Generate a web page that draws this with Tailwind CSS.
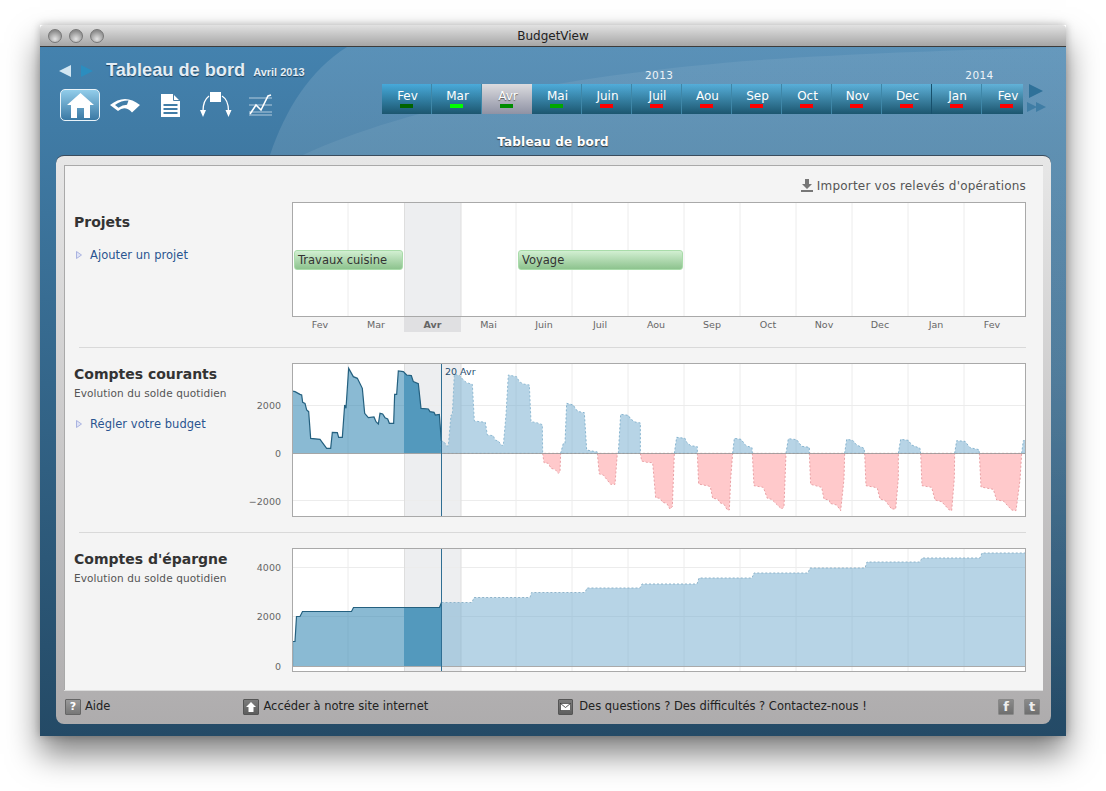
<!DOCTYPE html>
<html lang="fr">
<head>
<meta charset="utf-8">
<title>BudgetView</title>
<script src="https://cdn.jsdelivr.net/npm/@tailwindcss/browser@4"></script>
</head>
<body class="bg-white w-[1106px] h-[791px] overflow-hidden pt-[25px] pl-[40px] font-['DejaVu_Sans',sans-serif]">

<!-- Window -->
<div class="w-[1026px] h-[711px] flex flex-col shadow-[0_18px_30px_rgba(0,0,0,0.5),0_0_8px_rgba(0,0,0,0.25)]">

  <!-- Title bar -->
  <div class="h-[22px] shrink-0 flex items-center relative bg-gradient-to-b from-[#e2e2e2] to-[#a6a6a6] border-b border-[#3c3c3c] rounded-t-[4px]">
    <div class="flex gap-[7px] pl-[8px]">
      <span class="w-[14px] h-[14px] rounded-full border border-[#777] bg-[radial-gradient(circle_at_50%_75%,#e4e4e4,#8c8c8c_75%)]"></span>
      <span class="w-[14px] h-[14px] rounded-full border border-[#777] bg-[radial-gradient(circle_at_50%_75%,#e4e4e4,#8c8c8c_75%)]"></span>
      <span class="w-[14px] h-[14px] rounded-full border border-[#777] bg-[radial-gradient(circle_at_50%_75%,#e4e4e4,#8c8c8c_75%)]"></span>
    </div>
    <span class="absolute left-0 right-0 text-center text-[12px] text-[#222]">BudgetView</span>
  </div>

  <!-- Blue body -->
  <div class="flex-1 relative flex flex-col overflow-hidden bg-gradient-to-b from-[#4482ae] to-[#244a66]">
    <!-- background swooshes -->
    <svg class="absolute left-0 top-0" width="1026" height="689" viewBox="40 47 1026 689">
      <defs>
        <linearGradient id="fade" x1="0" y1="47" x2="0" y2="720" gradientUnits="userSpaceOnUse">
          <stop offset="0" stop-color="#fff" stop-opacity="0.12"/>
          <stop offset="0.5" stop-color="#fff" stop-opacity="0.09"/>
          <stop offset="1" stop-color="#fff" stop-opacity="0"/>
        </linearGradient>
      </defs>
      <path d="M347 47C310 70 285 110 270 155C250 230 245 300 245 736H1066V47Z" fill="url(#fade)"/>
      <path d="M303 155C400 110 560 75 760 60C880 52 980 50 1066 47V736H245V190Z" fill="url(#fade)" opacity="0.6"/>
    </svg>

    <!-- Header -->
    <div class="relative h-[108px] shrink-0 flex flex-col">
      <div class="h-[80px] flex">
        <!-- Left: navigation and title -->
        <div class="w-[342px] shrink-0 pl-[19px] pt-[13px]">
          <div class="flex items-center h-[22px]">
            <svg width="12" height="12" viewBox="0 0 12 12"><path d="M0 6L12 0V12Z" fill="#d2e6f2"/></svg>
            <svg class="ml-[10px]" width="12" height="12" viewBox="0 0 12 12"><path d="M12 6L0 0V12Z" fill="#2b8dbf"/></svg>
            <span class="ml-[13px] text-[18.2px] font-bold text-[#e3edf5] font-['Liberation_Sans',sans-serif] [text-shadow:0_1px_1px_#1d3f5a]">Tableau de bord</span>
            <span class="ml-[8px] mt-[3px] text-[11px] font-bold text-[#e3edf5] font-['Liberation_Sans',sans-serif] [text-shadow:0_1px_1px_#1d3f5a]">Avril 2013</span>
          </div>
          <div class="flex items-center mt-[7px] ml-[1px] h-[32px]">
            <div class="w-[40px] h-[32px] rounded-[5px] border border-[#e8f2f8] bg-gradient-to-b from-[#92cdea] to-[#3a79a4] flex items-center justify-center">
              <svg width="27" height="25" viewBox="0 0 27 25"><path d="M13.5 0L27 12H23V25H17V15H10V25H4V12H0Z" fill="#fff"/></svg>
            </div>
            <svg class="ml-[10px]" width="30" height="16" viewBox="0 0 30 16"><path d="M0 8Q15 -4 30 8L22 15.500Q15 8 8 14ZM5 8L8.500 10.800Q12.500 7.800 17 7.800L18.500 3.600Q11 3.600 5 8Z" fill="#fff" fill-rule="evenodd"/></svg>
            <svg class="ml-[21px]" width="19" height="23" viewBox="0 0 19 23"><path d="M0 0H12L19 7V23H0Z M2.500 10V12H16.500V10Z M2.500 14V16H16.500V14Z M2.500 18V20H16.500V18Z" fill="#fff" fill-rule="evenodd"/><path d="M12.500 0V6.500H19" fill="none" stroke="#4a7fa6" stroke-width="1"/></svg>
            <svg class="ml-[20px]" width="32" height="26" viewBox="0 0 32 26"><rect x="10" y="0" width="11" height="10" fill="#fff"/><path d="M9 4C5 7 3 13 3 19M22 4C27 7 28.500 13 28.500 19" fill="none" stroke="#fff" stroke-width="1.300"/><path d="M0 18H6L3 25ZM25.500 18H31.500L28.500 25Z" fill="#fff"/></svg>
            <svg class="ml-[17px]" width="23" height="22" viewBox="0 0 23 22"><path d="M0 4H23M0 11H23M0 18H23M0 21H23" stroke="#cfe0ec" stroke-width="0.800" fill="none"/><path d="M1 20L7 11L12 16L19 2L22 1" stroke="#fff" stroke-width="1.600" fill="none"/></svg>
          </div>
        </div>
        <!-- Right: timeline -->
        <div class="pt-[20px]">
          <div class="h-[17px] flex text-[10.5px] tracking-[0.4px] text-[#eef4f8] leading-[17px]">
            <span class="ml-[263px]">2013</span>
            <span class="ml-[292px]">2014</span>
          </div>
          <div class="flex">
            <div class="w-[641px] h-[30px] flex overflow-hidden text-[12px] text-white leading-[25px] indent-[2px] bg-gradient-to-r from-[#46a9da] to-[#62b2d8]">
              <div class="w-[50px] shrink-0 text-center border-r border-[#3f87a8] bg-gradient-to-b from-transparent to-[#1c566f] relative">Fev<span class="absolute left-[18px] bottom-[6px] w-[13px] h-[4px] bg-[#006400]"></span></div>
              <div class="w-[50px] shrink-0 text-center border-r border-[#3f87a8] bg-gradient-to-b from-transparent to-[#1c566f] relative">Mar<span class="absolute left-[18px] bottom-[6px] w-[13px] h-[4px] bg-[#00ff00]"></span></div>
              <div class="w-[50px] shrink-0 text-center bg-gradient-to-b from-[#dcdcdf] to-[#8f92a4] relative [text-shadow:0_1px_1px_#555]">Avr<span class="absolute left-[18px] bottom-[6px] w-[13px] h-[4px] bg-[#008c00]"></span></div>
              <div class="w-[50px] shrink-0 text-center border-r border-[#3f87a8] bg-gradient-to-b from-transparent to-[#1c566f] relative">Mai<span class="absolute left-[18px] bottom-[6px] w-[13px] h-[4px] bg-[#00a800]"></span></div>
              <div class="w-[50px] shrink-0 text-center border-r border-[#3f87a8] bg-gradient-to-b from-transparent to-[#1c566f] relative">Juin<span class="absolute left-[18px] bottom-[6px] w-[13px] h-[4px] bg-[#ff0000]"></span></div>
              <div class="w-[50px] shrink-0 text-center border-r border-[#3f87a8] bg-gradient-to-b from-transparent to-[#1c566f] relative">Juil<span class="absolute left-[18px] bottom-[6px] w-[13px] h-[4px] bg-[#ff0000]"></span></div>
              <div class="w-[50px] shrink-0 text-center border-r border-[#3f87a8] bg-gradient-to-b from-transparent to-[#1c566f] relative">Aou<span class="absolute left-[18px] bottom-[6px] w-[13px] h-[4px] bg-[#ff0000]"></span></div>
              <div class="w-[50px] shrink-0 text-center border-r border-[#3f87a8] bg-gradient-to-b from-transparent to-[#1c566f] relative">Sep<span class="absolute left-[18px] bottom-[6px] w-[13px] h-[4px] bg-[#ff0000]"></span></div>
              <div class="w-[50px] shrink-0 text-center border-r border-[#3f87a8] bg-gradient-to-b from-transparent to-[#1c566f] relative">Oct<span class="absolute left-[18px] bottom-[6px] w-[13px] h-[4px] bg-[#ff0000]"></span></div>
              <div class="w-[50px] shrink-0 text-center border-r border-[#3f87a8] bg-gradient-to-b from-transparent to-[#1c566f] relative">Nov<span class="absolute left-[18px] bottom-[6px] w-[13px] h-[4px] bg-[#ff0000]"></span></div>
              <div class="w-[50px] shrink-0 text-center border-r border-[#17506c] bg-gradient-to-b from-transparent to-[#1c566f] relative">Dec<span class="absolute left-[18px] bottom-[6px] w-[13px] h-[4px] bg-[#ff0000]"></span></div>
              <div class="w-[50px] shrink-0 text-center border-r border-[#3f87a8] bg-gradient-to-b from-transparent to-[#1c566f] relative">Jan<span class="absolute left-[18px] bottom-[6px] w-[13px] h-[4px] bg-[#ff0000]"></span></div>
              <div class="w-[50px] shrink-0 text-center bg-gradient-to-b from-transparent to-[#1c566f] relative">Fev<span class="absolute left-[18px] bottom-[6px] w-[13px] h-[4px] bg-[#ff0000]"></span></div>
            </div>
            <div class="ml-[4px] flex flex-col">
              <svg class="ml-[2px]" width="14" height="14" viewBox="0 0 14 14"><path d="M0 0L14 7L0 14Z" fill="#2f7199"/></svg>
              <svg class="mt-[4px]" width="19" height="10" viewBox="0 0 19 10"><path d="M0 0L10 5L0 10ZM9 0L19 5L9 10Z" fill="#3f7da5"/></svg>
            </div>
          </div>
        </div>
      </div>
      <div class="text-center text-[12px] font-bold text-white tracking-[0.2px] leading-[20px] mt-[5px] [text-shadow:0_1px_1px_#333]">Tableau de bord</div>
    </div>

    <!-- Panel -->
    <div class="relative mx-[16px] w-[995px] h-[569px] rounded-[8px] border-t border-[#3a4c5c] flex flex-col bg-gradient-to-b from-[#e7e7e7] to-[#aeacad] px-[8px] pt-[9px]">
      <div class="h-[525px] shrink-0 bg-[#f4f4f4] border-t border-l border-[#a9a9a9] shadow-[0_1px_0_#ddd]">

        <!-- Import -->
        <div class="h-[36px] pt-[4px] flex items-center justify-end pr-[17px] text-[12px] tracking-[0.2px] text-[#555]">
          <svg class="mr-[4px] mb-[2px]" width="12" height="13" viewBox="0 0 12 13"><path d="M4 0H8V5H11L6 10L1 5H4ZM0 11H12V13H0Z" fill="#777"/></svg>
          Importer vos relevés d'opérations
        </div>

        <!-- Projets -->
        <div class="flex">
          <div class="w-[227px] shrink-0 pl-[9px]">
            <h2 class="text-[14px] font-bold text-[#333] leading-[18px] mt-[11px]">Projets</h2>
            <a class="mt-[15px] flex items-center text-[11.5px] tracking-[0.05px] text-[#2a5490] leading-[18px]">
              <svg class="ml-[2px] mr-[8px]" width="6" height="8" viewBox="0 0 6 8"><path d="M.5 .5L5.500 4L.5 7.500Z" fill="#dfe3f5" stroke="#aab3e0"/></svg>Ajouter un projet
            </a>
          </div>
          <div class="w-[734px]">
            <div class="relative w-[734px] h-[115px]">
              <svg class="block" width="734" height="115" viewBox="292 202 734 115">
                <rect x="292" y="202" width="734" height="115" fill="#fff"/>
                <rect x="404" y="202" width="57" height="115" fill="#edeef0"/>
                <path d="M348 202V317M516 202V317M572 202V317M628 202V317M684 202V317M740 202V317M796 202V317M852 202V317M908 202V317M964 202V317" stroke="#ececec" fill="none"/>
                <path d="M404.500 202V317M461 202V317" stroke="#dedede" fill="none"/>
                <rect x="292.500" y="202.500" width="733" height="114" fill="none" stroke="#a9a9a9"/>
              </svg>
              <div class="absolute left-[2px] top-[48px] w-[109px] h-[20px] rounded-[3px] border border-[#a9dcaa] bg-gradient-to-b from-[#d2efd2] to-[#8dc38e] text-[11.5px] leading-[18px] text-[#333] pl-[3px]">Travaux cuisine</div>
              <div class="absolute left-[226px] top-[48px] w-[165px] h-[20px] rounded-[3px] border border-[#a9dcaa] bg-gradient-to-b from-[#d2efd2] to-[#8dc38e] text-[11.5px] leading-[18px] text-[#333] pl-[3px]">Voyage</div>
            </div>
            <div class="flex h-[15px] text-[9.5px] leading-[16px] text-[#666] text-center">
              <span class="w-[56px]">Fev</span><span class="w-[56px]">Mar</span><span class="w-[57px] font-bold bg-[#e0e0e2]">Avr</span><span class="w-[55px]">Mai</span><span class="w-[56px]">Juin</span><span class="w-[56px]">Juil</span><span class="w-[56px]">Aou</span><span class="w-[56px]">Sep</span><span class="w-[56px]">Oct</span><span class="w-[56px]">Nov</span><span class="w-[56px]">Dec</span><span class="w-[56px]">Jan</span><span class="w-[56px]">Fev</span>
            </div>
          </div>
        </div>

        <div class="ml-[14px] w-[947px] h-px bg-[#d9d9d9] mt-[15px]"></div>

        <!-- Comptes courants -->
        <div class="flex mt-[15px]">
          <div class="w-[227px] shrink-0 pl-[9px] relative">
            <h2 class="text-[14px] font-bold text-[#333] leading-[18px] mt-[2px]">Comptes courants</h2>
            <p class="text-[10.5px] tracking-[0.1px] text-[#555] leading-[14px] mt-[3px]">Evolution du solde quotidien</p>
            <a class="mt-[15px] flex items-center text-[11.5px] tracking-[0.05px] text-[#2a5490] leading-[18px]">
              <svg class="ml-[2px] mr-[8px]" width="6" height="8" viewBox="0 0 6 8"><path d="M.5 .5L5.500 4L.5 7.500Z" fill="#dfe3f5" stroke="#aab3e0"/></svg>Régler votre budget
            </a>
            <span class="absolute right-[11px] top-[36px] text-[9.5px] leading-[14px] text-[#666]">2000</span>
            <span class="absolute right-[11px] top-[84px] text-[9.5px] leading-[14px] text-[#666]">0</span>
            <span class="absolute right-[11px] top-[132px] text-[9.5px] leading-[14px] text-[#666]">−2000</span>
          </div>
          <svg class="block" width="734" height="154" viewBox="292 363 734 154">
            <defs><clipPath id="cur-band"><rect x="404" y="363" width="37" height="90"/></clipPath></defs>
            <rect x="292" y="363" width="734" height="154" fill="#fff"/>
            <rect x="404" y="363" width="57" height="154" fill="#edeef0"/>
            <path d="M348 363V517M516 363V517M572 363V517M628 363V517M684 363V517M740 363V517M796 363V517M852 363V517M908 363V517M964 363V517M292 405.500H1026M292 500.500H1026" stroke="#ececec" fill="none"/>
            <path d="M404.500 363V517M461 363V517" stroke="#dedede" fill="none"/>

            <g transform="translate(250 355) scale(.33333)">
              <!-- past balance -->
              <path d="M127 295V108L135 110L150 118L155 120L158 142L165 145L170 165L176 170L182 250L210 253L230 280L242 280L247 232L262 233L266 247L277 247L284 150L288 160L296 40L310 65L322 70L337 100L344 175L355 188L372 186L378 200L385 207L390 175L398 177L405 188L413 192L418 205L431 205L434 118L440 118L445 48L460 50L470 60L484 62L490 80L505 86L513 160L535 162L540 170L552 172L556 180L568 178L574 258V295Z" fill="#3c8cb6" fill-opacity="0.6"/>
            </g>
            <g clip-path="url(#cur-band)"><g transform="translate(250 355) scale(.33333)">
              <path d="M127 295V108L135 110L150 118L155 120L158 142L165 145L170 165L176 170L182 250L210 253L230 280L242 280L247 232L262 233L266 247L277 247L284 150L288 160L296 40L310 65L322 70L337 100L344 175L355 188L372 186L378 200L385 207L390 175L398 177L405 188L413 192L418 205L431 205L434 118L440 118L445 48L460 50L470 60L484 62L490 80L505 86L513 160L535 162L540 170L552 172L556 180L568 178L574 258V295Z" fill="#5399bd"/>
            </g></g>
            <g transform="translate(250 355) scale(.33333)">
              <path d="M127 108L135 110L150 118L155 120L158 142L165 145L170 165L176 170L182 250L210 253L230 280L242 280L247 232L262 233L266 247L277 247L284 150L288 160L296 40L310 65L322 70L337 100L344 175L355 188L372 186L378 200L385 207L390 175L398 177L405 188L413 192L418 205L431 205L434 118L440 118L445 48L460 50L470 60L484 62L490 80L505 86L513 160L535 162L540 170L552 172L556 180L568 178L574 258" fill="none" stroke="#24607f" stroke-width="1.200" vector-effect="non-scaling-stroke"/>
              <!-- forecast -->
              <path d="M574 295V258L582 260L590 273L595 273L603 180L607 180L613 58L630 62L640 75L650 83L667 88L673 198L706 202L712 240L730 242L735 255L745 258L755 271L760 271L768 180L775 60L800 65L808 80L820 87L838 90L843 200L860 203L877 209L878 295Z" fill="#6fa9cd" fill-opacity="0.5" stroke="#8fbad3" stroke-dasharray="2 2" vector-effect="non-scaling-stroke"/>
            </g>
            <g transform="translate(540 355) scale(.33333)" stroke-dasharray="2 2">
              <g fill="#ff9398" fill-opacity="0.5" stroke="#e9a0a4">
                <path vector-effect="non-scaling-stroke" d="M8 295L12 323L25 325L33 340L45 343L55 355L60 350L62 295Z"/>
                <path vector-effect="non-scaling-stroke" d="M172 295L178 357L190 360L200 373L212 388L225 388L232 295Z"/>
                <path vector-effect="non-scaling-stroke" d="M301 295L305 318L320 322L338 323L347 428L360 430L368 442L380 445L390 462L397 455L403 295Z"/>
                <path vector-effect="non-scaling-stroke" d="M472 295L476 387L505 393L511 395L518 430L533 432L540 443L552 448L562 465L568 465L572 372L578 295Z"/>
                <path vector-effect="non-scaling-stroke" d="M637 295L642 392L670 397L682 430L695 433L712 450L725 462L732 455L738 295Z"/>
                <path vector-effect="non-scaling-stroke" d="M808 295L812 388L845 397L852 432L868 435L870 445L890 450L902 467L912 372L914 295Z"/>
              </g>
              <g fill="#6fa9cd" fill-opacity="0.5" stroke="#86b4cf">
                <path vector-effect="non-scaling-stroke" d="M62 295L70 265L75 265L80 145L100 150L107 163L117 170L133 173L140 285L172 291V295Z"/>
                <path vector-effect="non-scaling-stroke" d="M235 295L242 178L265 181L272 192L285 201L301 204V295Z"/>
                <path vector-effect="non-scaling-stroke" d="M403 295L410 247L435 250L440 262L452 272L472 275V295Z"/>
                <path vector-effect="non-scaling-stroke" d="M578 295L583 250L603 253L618 272L636 278L637 295Z"/>
                <path vector-effect="non-scaling-stroke" d="M738 295L745 251L770 254L785 274L808 277V295Z"/>
              </g>
            </g>
            <g transform="translate(830 355) scale(.33333)" stroke-dasharray="2 2">
              <g fill="#ff9398" fill-opacity="0.5" stroke="#e9a0a4">
                <path vector-effect="non-scaling-stroke" d="M104 295L108 392L135 397L142 400L150 432L165 436L185 462L197 462L205 370V295Z"/>
                <path vector-effect="non-scaling-stroke" d="M272 295L276 392L305 397L315 435L335 440L358 465L365 467L373 370L374 295Z"/>
                <path vector-effect="non-scaling-stroke" d="M448 295L453 396L490 403L500 435L520 438L545 465L558 467L570 375L575 295Z"/>
              </g>
              <g fill="#6fa9cd" fill-opacity="0.5" stroke="#86b4cf">
                <path vector-effect="non-scaling-stroke" d="M44 295L50 253L68 256L80 270L102 280L104 295Z"/>
                <path vector-effect="non-scaling-stroke" d="M205 295L212 253L235 256L245 270L270 280L272 295Z"/>
                <path vector-effect="non-scaling-stroke" d="M374 295L380 257L405 259L420 278L447 284L448 295Z"/>
                <path vector-effect="non-scaling-stroke" d="M575 295L580 257L586 256V295Z"/>
              </g>
            </g>
            <path d="M292 453.500H1026" stroke="#999" stroke-opacity="0.85" fill="none"/>
            <path d="M441.500 363V517" stroke="#2f6e93" fill="none"/>
            <text x="445" y="375" font-size="9.500" fill="#1f4d6e">20 Avr</text>
            <rect x="292.500" y="363.500" width="733" height="153" fill="none" stroke="#a9a9a9"/>
          </svg>
        </div>

        <div class="ml-[14px] w-[947px] h-px bg-[#d9d9d9] mt-[15px]"></div>

        <!-- Comptes d'épargne -->
        <div class="flex mt-[15px]">
          <div class="w-[227px] shrink-0 pl-[9px] relative">
            <h2 class="text-[14px] font-bold text-[#333] leading-[18px] mt-[2px]">Comptes d'épargne</h2>
            <p class="text-[10.5px] tracking-[0.1px] text-[#555] leading-[14px] mt-[3px]">Evolution du solde quotidien</p>
            <span class="absolute right-[11px] top-[13px] text-[9.5px] leading-[14px] text-[#666]">4000</span>
            <span class="absolute right-[11px] top-[62px] text-[9.5px] leading-[14px] text-[#666]">2000</span>
            <span class="absolute right-[11px] top-[112px] text-[9.5px] leading-[14px] text-[#666]">0</span>
          </div>
          <svg class="block" width="734" height="124" viewBox="292 548 734 124">
            <defs><clipPath id="sav-band"><rect x="404" y="548" width="37" height="124"/></clipPath></defs>
            <rect x="292" y="548" width="734" height="124" fill="#fff"/>
            <rect x="404" y="548" width="57" height="124" fill="#edeef0"/>
            <path d="M348 548V672M516 548V672M572 548V672M628 548V672M684 548V672M740 548V672M796 548V672M852 548V672M908 548V672M964 548V672M292 567.500H1026M292 616.500H1026" stroke="#ececec" fill="none"/>
            <path d="M404.500 548V672M461 548V672" stroke="#dedede" fill="none"/>
            <path d="M292 666V641.500H295L296.500 616.500H300L302.500 611.500H351.500L353.500 607.500H439.500L441.500 602.500V666Z" fill="#3c8cb6" fill-opacity="0.6"/>
            <path clip-path="url(#sav-band)" d="M292 666V641.500H295L296.500 616.500H300L302.500 611.500H351.500L353.500 607.500H439.500L441.500 602.500V666Z" fill="#5399bd"/>
            <path d="M292.500 666V641.500H295L296.500 616.500H300L302.500 611.500H351.500L353.500 607.500H439.500L441.500 602.500" fill="none" stroke="#24607f" stroke-width="1.200"/>
            <path d="M441.500 666V602.500H472L474 597.500H530L531.500 592.500H585L587 588H640L642 584H697L699 578H752L754 573H808L810 568H865L867 562H920L922 558H980L982 553H1026V666Z" fill="#6fa9cd" fill-opacity="0.5"/>
            <path d="M441.500 602.500H472L474 597.500H530L531.500 592.500H585L587 588H640L642 584H697L699 578H752L754 573H808L810 568H865L867 562H920L922 558H980L982 553H1026" fill="none" stroke="#8fb4ca" stroke-dasharray="2 2"/>
            <path d="M292 666.500H1026" stroke="#aaa" fill="none"/>
            <path d="M441.500 548V672" stroke="#2f6e93" fill="none"/>
            <rect x="292.500" y="548.500" width="733" height="123" fill="none" stroke="#a9a9a9"/>
          </svg>
        </div>
      </div>

      <!-- Footer -->
      <div class="h-[34px] flex items-center text-[11.5px] text-[#222] -mx-[7px] pl-[8px] pr-[10px]">
        <span class="w-[16px] h-[16px] rounded-[1px] border border-[#666] bg-gradient-to-b from-[#9a9a9a] to-[#777] text-white text-[11px] leading-[14px] text-center font-bold">?</span>
        <span class="ml-[4px]">Aide</span>
        <span class="ml-[133px] w-[16px] h-[16px] rounded-[1px] border border-[#555] bg-gradient-to-b from-[#7c7c7c] to-[#5e5e5e] flex items-center justify-center">
          <svg width="10" height="10" viewBox="0 0 10 10"><path d="M5 0L10 5H7.500V10H2.500V5H0Z" fill="#fff"/></svg>
        </span>
        <span class="ml-[4px]">Accéder à notre site internet</span>
        <span class="ml-[130px] w-[15px] h-[16px] rounded-[1px] border border-[#555] bg-gradient-to-b from-[#7c7c7c] to-[#5e5e5e] flex items-center justify-center">
          <svg width="11" height="8" viewBox="0 0 11 8"><rect x=".5" y=".5" width="10" height="7" fill="#fff" stroke="#333" stroke-width="0.600"/><path d="M.5 .5L5.500 4.500L10.500 .5" fill="none" stroke="#333" stroke-width="0.800"/></svg>
        </span>
        <span class="ml-[6px]">Des questions ? Des difficultés ? Contactez-nous !</span>
        <span class="ml-auto w-[16px] h-[16px] rounded-[1px] border border-[#888] bg-gradient-to-b from-[#8a8a8a] to-[#6f6f6f] text-[#eee] text-[13px] leading-[14px] text-center font-bold">f</span>
        <span class="ml-[10px] w-[16px] h-[16px] rounded-[1px] border border-[#888] bg-gradient-to-b from-[#8a8a8a] to-[#6f6f6f] text-[#eee] text-[13px] leading-[14px] text-center font-bold">t</span>
      </div>
    </div>
  </div>
</div>
</body>
</html>
